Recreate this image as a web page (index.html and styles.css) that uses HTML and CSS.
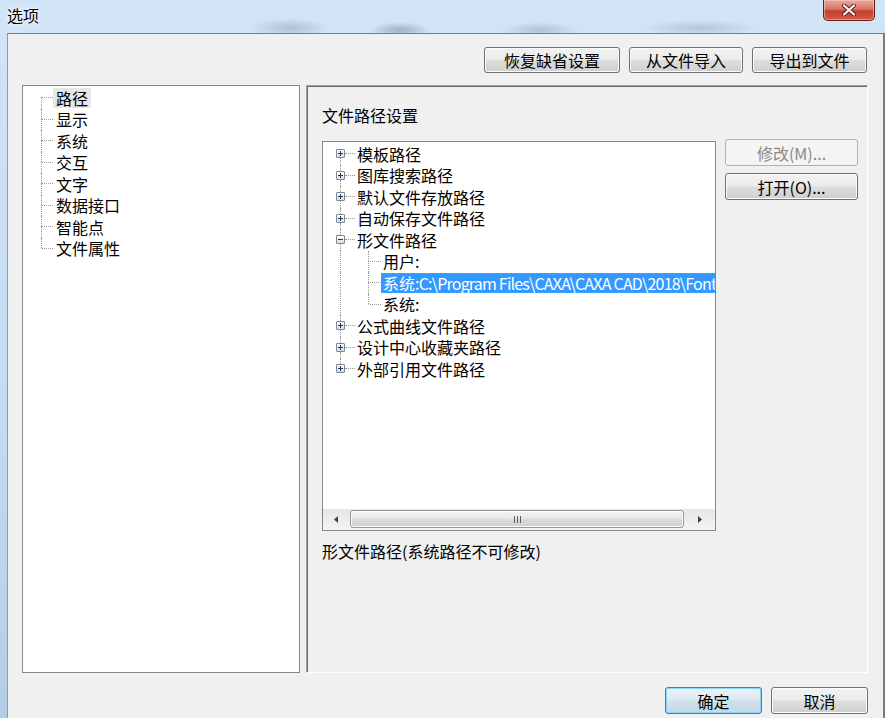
FILE: index.html
```html
<!DOCTYPE html>
<html lang="zh-CN">
<head>
    <meta charset="UTF-8">
    <title>选项</title>
    <link rel="stylesheet" href="styles.css">
</head>
<body>
    <div class="window">
        <div class="titlebar">
            <span class="title">选项</span>
            <button class="close">
                <svg width="14" height="12" viewBox="0 0 14 12">
                    <path d="M2 1.5L12 10.5M12 1.5L2 10.5" stroke="#5a1a14" stroke-width="4" stroke-linecap="round"/>
                    <path d="M2 1.5L12 10.5M12 1.5L2 10.5" stroke="#fff" stroke-width="2.2" stroke-linecap="round"/>
                </svg>
            </button>
        </div>

        <div class="client">
            <div class="toolbar">
                <button class="btn btn-reset">恢复缺省设置</button>
                <button class="btn btn-import">从文件导入</button>
                <button class="btn btn-export">导出到文件</button>
            </div>

            <div class="main">
                <!-- 左侧分类树 -->
                <div class="nav-tree">
                    <div class="row">
                        <span class="gap-nav"></span>
                        <span class="elbow first"><i></i><i></i></span>
                        <span class="nav-label selected">路径</span>
                    </div>
                    <div class="row">
                        <span class="gap-nav"></span>
                        <span class="elbow"><i></i><i></i></span>
                        <span class="nav-label">显示</span>
                    </div>
                    <div class="row">
                        <span class="gap-nav"></span>
                        <span class="elbow"><i></i><i></i></span>
                        <span class="nav-label">系统</span>
                    </div>
                    <div class="row">
                        <span class="gap-nav"></span>
                        <span class="elbow"><i></i><i></i></span>
                        <span class="nav-label">交互</span>
                    </div>
                    <div class="row">
                        <span class="gap-nav"></span>
                        <span class="elbow"><i></i><i></i></span>
                        <span class="nav-label">文字</span>
                    </div>
                    <div class="row">
                        <span class="gap-nav"></span>
                        <span class="elbow"><i></i><i></i></span>
                        <span class="nav-label">数据接口</span>
                    </div>
                    <div class="row">
                        <span class="gap-nav"></span>
                        <span class="elbow"><i></i><i></i></span>
                        <span class="nav-label">智能点</span>
                    </div>
                    <div class="row">
                        <span class="gap-nav"></span>
                        <span class="elbow last"><i></i><i></i></span>
                        <span class="nav-label">文件属性</span>
                    </div>
                </div>

                <!-- 右侧设置页 -->
                <div class="page">
                    <div class="page-title">文件路径设置</div>

                    <div class="path-area">
                        <div class="path-tree">
                            <div class="tree-rows">
                                <div class="row">
                                    <span class="gap-root"></span>
                                    <span class="node first"><i></i><span class="pm"><svg width="5" height="5" viewBox="0 0 5 5"><path d="M0 2.5h5M2.5 0v5" stroke="#1e395b"/></svg></span><i></i></span>
                                    <span class="hline"></span>
                                    <span class="label">模板路径</span>
                                </div>
                                <div class="row">
                                    <span class="gap-root"></span>
                                    <span class="node"><i></i><span class="pm"><svg width="5" height="5" viewBox="0 0 5 5"><path d="M0 2.5h5M2.5 0v5" stroke="#1e395b"/></svg></span><i></i></span>
                                    <span class="hline"></span>
                                    <span class="label">图库搜索路径</span>
                                </div>
                                <div class="row">
                                    <span class="gap-root"></span>
                                    <span class="node"><i></i><span class="pm"><svg width="5" height="5" viewBox="0 0 5 5"><path d="M0 2.5h5M2.5 0v5" stroke="#1e395b"/></svg></span><i></i></span>
                                    <span class="hline"></span>
                                    <span class="label">默认文件存放路径</span>
                                </div>
                                <div class="row">
                                    <span class="gap-root"></span>
                                    <span class="node"><i></i><span class="pm"><svg width="5" height="5" viewBox="0 0 5 5"><path d="M0 2.5h5M2.5 0v5" stroke="#1e395b"/></svg></span><i></i></span>
                                    <span class="hline"></span>
                                    <span class="label">自动保存文件路径</span>
                                </div>
                                <div class="row">
                                    <span class="gap-root"></span>
                                    <span class="node"><i></i><span class="pm"><svg width="5" height="5" viewBox="0 0 5 5"><path d="M0 2.5h5" stroke="#1e395b"/></svg></span><i></i></span>
                                    <span class="hline"></span>
                                    <span class="label">形文件路径</span>
                                </div>
                                <div class="row">
                                    <span class="gap-root"></span>
                                    <span class="node"><i></i></span>
                                    <span class="gap-child"></span>
                                    <span class="elbow"><i></i><i></i></span>
                                    <span class="label">用户:</span>
                                </div>
                                <div class="row">
                                    <span class="gap-root"></span>
                                    <span class="node"><i></i></span>
                                    <span class="gap-child"></span>
                                    <span class="elbow"><i></i><i></i></span>
                                    <span class="label selected">系统<span class="path">:C:\Program Files\CAXA\CAXA CAD\2018\Font</span></span>
                                </div>
                                <div class="row">
                                    <span class="gap-root"></span>
                                    <span class="node"><i></i></span>
                                    <span class="gap-child"></span>
                                    <span class="elbow last"><i></i><i></i></span>
                                    <span class="label">系统:</span>
                                </div>
                                <div class="row">
                                    <span class="gap-root"></span>
                                    <span class="node"><i></i><span class="pm"><svg width="5" height="5" viewBox="0 0 5 5"><path d="M0 2.5h5M2.5 0v5" stroke="#1e395b"/></svg></span><i></i></span>
                                    <span class="hline"></span>
                                    <span class="label">公式曲线文件路径</span>
                                </div>
                                <div class="row">
                                    <span class="gap-root"></span>
                                    <span class="node"><i></i><span class="pm"><svg width="5" height="5" viewBox="0 0 5 5"><path d="M0 2.5h5M2.5 0v5" stroke="#1e395b"/></svg></span><i></i></span>
                                    <span class="hline"></span>
                                    <span class="label">设计中心收藏夹路径</span>
                                </div>
                                <div class="row">
                                    <span class="gap-root"></span>
                                    <span class="node last"><i></i><span class="pm"><svg width="5" height="5" viewBox="0 0 5 5"><path d="M0 2.5h5M2.5 0v5" stroke="#1e395b"/></svg></span><i></i></span>
                                    <span class="hline"></span>
                                    <span class="label">外部引用文件路径</span>
                                </div>
                            </div>

                            <div class="hscroll">
                                <span class="sb-arrow sb-left">
                                    <svg width="4" height="7" viewBox="0 0 4 7"><path d="M4 0v7L0 3.5z" fill="#404040"/></svg>
                                </span>
                                <span class="sb-thumb">
                                    <svg width="7" height="7" viewBox="0 0 7 7">
                                        <path d="M0.5 0v7M3.5 0v7M6.5 0v7" stroke="#5a5a5a"/>
                                    </svg>
                                </span>
                                <span class="sb-arrow sb-right">
                                    <svg width="4" height="7" viewBox="0 0 4 7"><path d="M0 0v7L4 3.5z" fill="#404040"/></svg>
                                </span>
                            </div>
                        </div>

                        <div class="side-buttons">
                            <button class="btn" disabled>修改(M)...</button>
                            <button class="btn">打开(O)...</button>
                        </div>
                    </div>

                    <div class="hint">形文件路径(系统路径不可修改)</div>
                </div>
            </div>

            <div class="footer">
                <button class="btn btn-default">确定</button>
                <button class="btn">取消</button>
            </div>
        </div>
    </div>
</body>
</html>
```

FILE: styles.css
```css
body {
    margin: 0;
    font-family: "Microsoft YaHei", "Noto Sans CJK SC", sans-serif;
    font-size: 16px;
    color: #000;
    overflow: hidden;
}

.window {
    width: 885px;
    height: 718px;
    display: flex;
    flex-direction: column;
    background:
        radial-gradient(ellipse 40px 10px at 290px 28px, rgba(110, 130, 150, 0.35), transparent),
        radial-gradient(ellipse 30px 8px at 400px 30px, rgba(80, 95, 115, 0.4), transparent),
        radial-gradient(ellipse 40px 8px at 540px 30px, rgba(100, 120, 140, 0.3), transparent),
        radial-gradient(ellipse 60px 8px at 700px 28px, rgba(110, 130, 150, 0.3), transparent),
        linear-gradient(to bottom, #d2e5f7 0%, #c3daf1 60%, #b4cde6 100%);
}

/* 标题栏 */
.titlebar {
    height: 33px;
    display: flex;
    justify-content: space-between;
    align-items: flex-start;
    padding-left: 7px;
}

.title {
    line-height: 31px;
    font-size: 16px;
    text-shadow: 0 0 6px #fff, 0 0 3px #fff;
}

.close {
    width: 52px;
    height: 21px;
    margin-right: 10px;
    padding: 0;
    border: 1px solid #6b1d17;
    border-top: none;
    border-radius: 0 0 5px 5px;
    background: linear-gradient(to bottom, #e9a99b 0%, #d9776a 45%, #c4402f 55%, #cf5d44 100%);
    box-shadow: inset 0 0 0 1px rgba(255, 210, 200, 0.5);
    display: flex;
    justify-content: center;
    align-items: center;
}

/* 客户区 */
.client {
    flex: 1;
    margin-left: 7px;
    background: #f0f0f0;
    border-left: 1px solid #8b9bb0;
    border-top: 1px solid #6f7f92;
    border-right: 2px solid #7b7b7b;
    padding: 13px 15px 0 14px;
    display: flex;
    flex-direction: column;
}

.btn {
    font-family: "Microsoft YaHei", "Noto Sans CJK SC", sans-serif;
    font-size: 16px;
    color: #000;
    height: 26px;
    padding: 0;
    border: 1px solid #707070;
    border-radius: 3px;
    background: linear-gradient(to bottom, #f2f2f2 0%, #ebebeb 48%, #dddddd 52%, #cfcfcf 100%);
    box-shadow: inset 0 0 0 1px #fbfbfb;
}

.btn:disabled {
    color: #8a8a8a;
    border-color: #adb2b5;
    background: #f4f4f4;
    box-shadow: none;
}

.toolbar {
    display: flex;
    justify-content: flex-end;
    gap: 9px;
    padding-right: 1px;
}

.btn-reset { width: 136px; }
.btn-import { width: 114px; }
.btn-export { width: 115px; }

.main {
    display: flex;
    gap: 6px;
    margin-top: 12px;
    height: 588px;
}

/* 树通用 */
.row {
    display: flex;
    align-items: center;
    height: 21.5px;
    white-space: nowrap;
}

.elbow {
    align-self: stretch;
    display: flex;
    flex-direction: column;
    flex: none;
}

.elbow i {
    flex: 1;
    border-left: 1px dotted #999;
}

.elbow i:last-child {
    border-top: 1px dotted #999;
}

.elbow.first i:first-child {
    border-left-color: transparent;
}

.elbow.last i:last-child {
    border-left-color: transparent;
}

/* 左侧分类树 */
.nav-tree {
    width: 278px;
    box-sizing: border-box;
    background: #fff;
    border: 1px solid #828790;
    padding-top: 1px;
}

.gap-nav {
    width: 18px;
    flex: none;
}

.nav-tree .elbow {
    width: 12px;
}

.nav-label {
    height: 20px;
    line-height: 20px;
    padding: 0 3px;
}

.nav-label.selected {
    background: #e6e6e6;
}

/* 右侧设置页 */
.page {
    flex: 1;
    background: #f0f0f0;
    border-top: 1px solid #a0a0a0;
    border-left: 1px solid #a0a0a0;
    border-right: 1px solid #fff;
    border-bottom: 1px solid #fff;
    box-shadow: inset 1px 1px 0 #696969;
    padding: 19px 8px 0 15px;
}

.page-title {
    line-height: 20px;
}

.path-area {
    display: flex;
    align-items: flex-start;
    gap: 9px;
    margin-top: 16px;
}

.path-tree {
    width: 394px;
    height: 390px;
    box-sizing: border-box;
    border: 1px solid #828790;
    background: #fff;
    display: flex;
    flex-direction: column;
    overflow: hidden;
}

.tree-rows {
    flex: 1;
    padding-top: 1px;
    overflow: hidden;
}

.gap-root {
    width: 13px;
    flex: none;
}

.node {
    width: 9px;
    align-self: stretch;
    display: flex;
    flex-direction: column;
    align-items: center;
    flex: none;
}

.node i {
    flex: 1;
    width: 0;
    border-left: 1px dotted #999;
}

.node.first i:first-child,
.node.last i:last-child {
    border-left-color: transparent;
}

.pm {
    width: 9px;
    height: 9px;
    box-sizing: border-box;
    border: 1px solid #7d8894;
    border-radius: 1px;
    background: linear-gradient(to bottom, #ffffff, #d8dde3);
    display: flex;
    justify-content: center;
    align-items: center;
    flex: none;
}

.pm svg {
    display: block;
}

.hline {
    width: 10px;
    border-top: 1px dotted #999;
    flex: none;
}

.gap-child {
    width: 23px;
    flex: none;
}

.path-tree .elbow {
    width: 13px;
}

.label {
    height: 20px;
    line-height: 18px;
    box-sizing: border-box;
    border: 1px solid transparent;
    padding: 0 1px;
}

.label.selected {
    background: #3399ff;
    color: #fff;
    border: 1px dotted #d9822b;
}

.path {
    letter-spacing: -0.8px;
}

/* 水平滚动条 */
.hscroll {
    height: 21px;
    display: flex;
    background: linear-gradient(to bottom, #e6e6e6, #f4f4f4);
    flex: none;
}

.sb-arrow {
    display: flex;
    justify-content: center;
    align-items: center;
    flex: none;
}

.sb-left { width: 26px; }
.sb-right { width: 30px; }

.sb-thumb {
    flex: 1;
    margin: 1px 1px 2px;
    border: 1px solid #989898;
    border-radius: 3px;
    background: linear-gradient(to bottom, #f5f5f5 0%, #e9e9e9 45%, #d9d9d9 55%, #d2d2d2 100%);
    box-shadow: inset 0 0 0 1px #fafafa;
    display: flex;
    justify-content: center;
    align-items: center;
}

.side-buttons {
    width: 133px;
    display: flex;
    flex-direction: column;
    gap: 7px;
    margin-top: -2px;
}

.side-buttons .btn {
    height: 27px;
}

.hint {
    margin-top: 10px;
    line-height: 20px;
}

/* 底部按钮 */
.footer {
    display: flex;
    justify-content: flex-end;
    gap: 9px;
    margin-top: 14px;
}

.footer .btn {
    width: 97px;
    height: 27px;
}

.btn-default {
    border-color: #3c7fb1;
    background: linear-gradient(to bottom, #e8f2f8 0%, #dde9f1 48%, #cfe0eb 52%, #c3d8e6 100%);
    box-shadow: inset 0 0 0 1px #8fd3f5;
}
```
